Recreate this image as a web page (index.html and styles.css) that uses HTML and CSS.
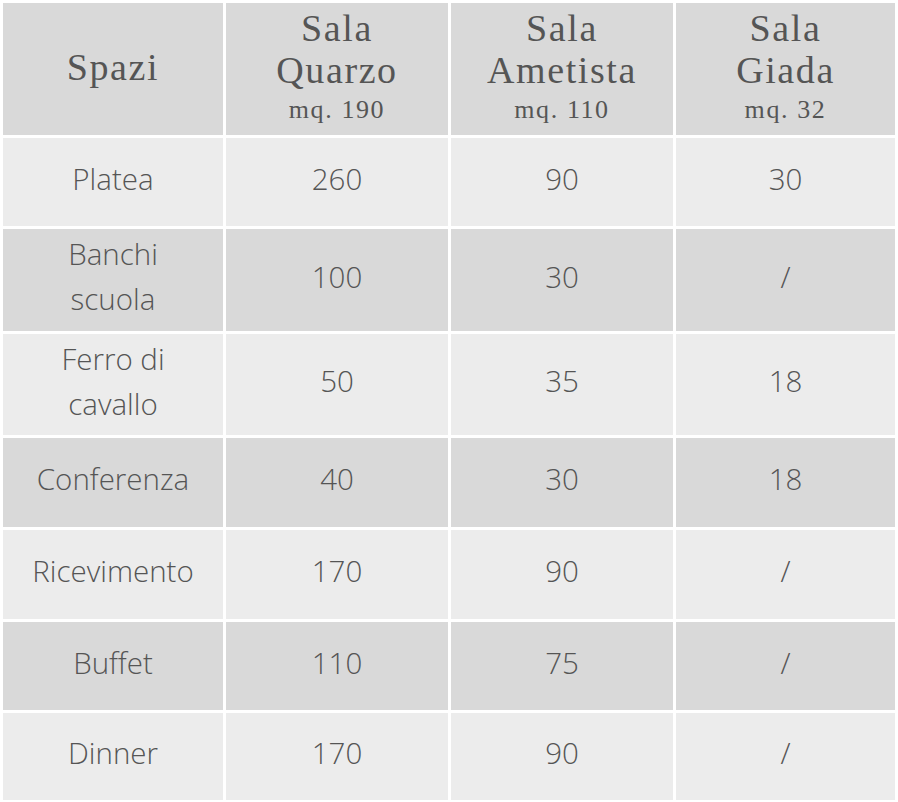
FILE: index.html
```html
<!DOCTYPE html>
<html lang="it">
<head>
<meta charset="utf-8">
<title>Spazi</title>
<link rel="stylesheet" href="styles.css">
</head>
<body>
<table class="rooms">
  <colgroup>
    <col class="c1"><col class="c2"><col class="c3"><col class="c4">
  </colgroup>
  <thead>
    <tr class="head">
      <th><span class="big">Spazi</span></th>
      <th><span class="big">Sala</span><span class="big">Quarzo</span><span class="small">mq. 190</span></th>
      <th><span class="big">Sala</span><span class="big">Ametista</span><span class="small">mq. 110</span></th>
      <th><span class="big">Sala</span><span class="big">Giada</span><span class="small">mq. 32</span></th>
    </tr>
  </thead>
  <tbody>
    <tr class="light r88"><td>Platea</td><td>260</td><td>90</td><td>30</td></tr>
    <tr class="dark r102"><td>Banchi<br>scuola</td><td>100</td><td>30</td><td>/</td></tr>
    <tr class="light r101"><td>Ferro di<br>cavallo</td><td>50</td><td>35</td><td>18</td></tr>
    <tr class="dark r89"><td>Conferenza</td><td>40</td><td>30</td><td>18</td></tr>
    <tr class="light r89"><td>Ricevimento</td><td>170</td><td>90</td><td>/</td></tr>
    <tr class="dark r88"><td>Buffet</td><td>110</td><td>75</td><td>/</td></tr>
    <tr class="light r87"><td>Dinner</td><td>170</td><td>90</td><td>/</td></tr>
  </tbody>
</table>
</body>
</html>
```
FILE: styles.css
```css
html, body {
  margin: 0;
  padding: 0;
  background: #ffffff;
}

.rooms {
  border-collapse: separate;
  border-spacing: 3px;
  width: 898px;
  table-layout: fixed;
  color: #555555;
}

.c1 { width: 220px; }
.c2 { width: 222px; }
.c3 { width: 222px; }
.c4 { width: 219px; }

.rooms th,
.rooms td {
  text-align: center;
  vertical-align: middle;
}

.head th {
  background: #d9d9d9;
  height: 119px;
  font-family: "Liberation Serif", "Times New Roman", serif;
  font-weight: normal;
  padding: 5px 4px 7px;
}

.big {
  display: block;
  font-size: 38px;
  line-height: 41.6px;
  letter-spacing: 1.6px;
}

.small {
  display: block;
  font-size: 26px;
  line-height: 37px;
  letter-spacing: 1.6px;
  font-variant-numeric: oldstyle-nums;
}

.rooms td {
  font-family: "Open Sans", "Lato", sans-serif;
  font-weight: 300;
  font-size: 29.5px;
  line-height: 45px;
  padding: 1px 6px 9px;
}

.light td { background: #ececec; }
.dark td { background: #d9d9d9; }

.r87 td { height: 77px; }
.r88 td { height: 78px; }
.r89 td { height: 79px; }
.r101 td { height: 91px; }
.r102 td { height: 92px; }
```
